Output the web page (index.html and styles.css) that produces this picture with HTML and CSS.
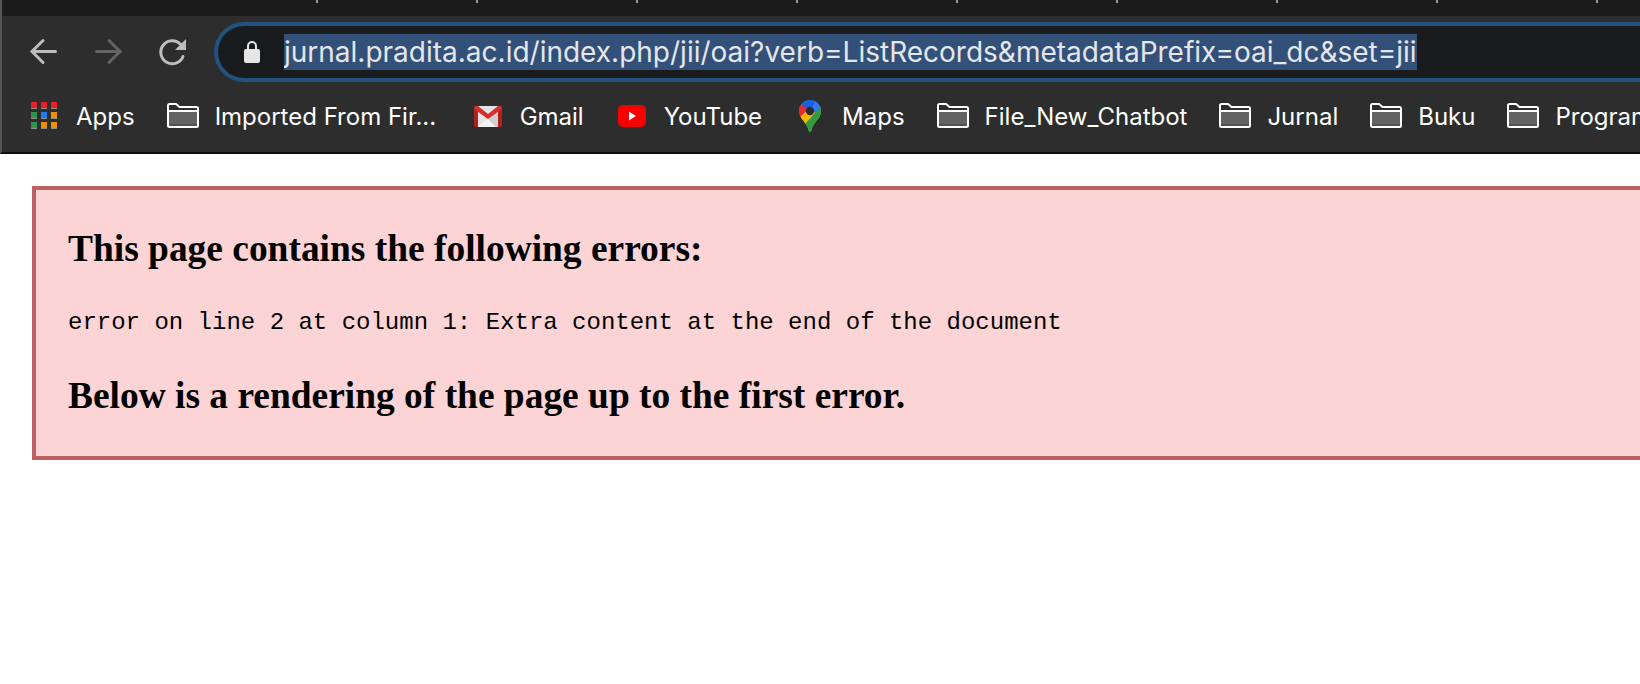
FILE: index.html
```html
<!DOCTYPE html>
<html lang="en">
<head>
  <meta charset="UTF-8" />
  <meta name="viewport" content="width=device-width, initial-scale=1.0" />
  <title>jurnal.pradita.ac.id</title>
  <link rel="stylesheet" href="styles.css">
</head>
<body>
  <!-- Shared icon shapes -->
  <svg class="sprite" aria-hidden="true">
    <symbol id="folder" viewBox="0 0 32 32">
      <path d="M2 12h28v14H2z" fill="#636363"/>
      <path d="M2 24h28v2H2z" fill="#505050"/>
      <path d="M1 25.500V5.500Q1 4 2.500 4H9l3.500 3H29.500Q31 7 31 8.500V25.500Q31 27 29.500 27H2.500Q1 27 1 25.500M1 11h30" fill="none" stroke="#fff" stroke-width="2"/>
    </symbol>
  </svg>

  <header class="browser">
    <div class="tabs"></div>

    <div class="toolbar">
      <button class="nav-btn" aria-label="Back">
        <svg width="32" height="32" viewBox="0 0 32 32"><path d="M27.500 15.500H4.500M15 4.500L4 15.500L15 26.500" fill="none" stroke="#bdbdbd" stroke-width="3" stroke-linecap="round"/></svg>
      </button>
      <button class="nav-btn" aria-label="Forward" disabled>
        <svg width="32" height="32" viewBox="0 0 32 32"><path d="M4.500 15.500H27.500M17 4.500L28 15.500L17 26.500" fill="none" stroke="#646464" stroke-width="3" stroke-linecap="round"/></svg>
      </button>
      <button class="nav-btn" aria-label="Reload">
        <svg width="32" height="32" viewBox="0 0 32 32"><path d="M27 20.500A11.500 11.500 0 1 1 24.500 8.200" fill="none" stroke="#bdbdbd" stroke-width="3" stroke-linecap="round"/><path d="M30 3v11H19z" fill="#bdbdbd"/></svg>
      </button>
      <label class="omnibox">
        <svg width="16" height="24" viewBox="0 0 16 24"><path d="M4 10V6a4 4 0 0 1 8 0v4" fill="none" stroke="#e6e6e6" stroke-width="2"/><rect y="9" width="16" height="14" rx="2" fill="#e6e6e6"/></svg>
        <input type="text" id="url" class="url" aria-label="Address" spellcheck="false" value="jurnal.pradita.ac.id/index.php/jii/oai?verb=ListRecords&amp;metadataPrefix=oai_dc&amp;set=jii">
      </label>
    </div>

    <nav class="bookmarks">
      <a href="#">
        <svg viewBox="0 0 32 32">
          <path d="M3 8h6v1H3zM13 8h6v1h-6zM23 8h6v1h-6zM3 18h6v1H3zM13 18h6v1h-6zM23 18h6v1h-6zM3 28h6v1H3zM13 28h6v1h-6zM23 28h6v1h-6z" fill="#8a8a8a"/>
          <path d="M3 2h6v6H3zM13 2h6v6h-6zM23 2h6v6h-6z" fill="#ee1c25"/>
          <path d="M3 12h6v6H3zM3 22h6v6H3z" fill="#35924a"/>
          <path d="M13 12h6v6h-6z" fill="#2479f3"/>
          <path d="M23 12h6v6h-6zM13 22h6v6h-6zM23 22h6v6h-6z" fill="#eb9100"/>
        </svg>
        <span>Apps</span>
      </a>
      <a href="#"><svg><use href="#folder"/></svg><span class="truncated">Imported From Fir...</span></a>
      <a href="#">
        <svg viewBox="0 0 32 32">
          <path d="M4 6h24v21H4z" fill="#e4e4e4"/>
          <path d="M6 27L16 18l10 9z" fill="#f3f3f3"/>
          <path d="M16 19l12-9v17h-4z" fill="#cfcfcf"/>
          <path d="M2 8h4v19H4q-2 0-2-2zM30 8h-4v19h2q2 0 2-2z" fill="#b3201c"/>
          <path d="M2 8q0-2 2-2h2l10 8 10-8h2q2 0 2 2v1L16 19 2 9z" fill="#d5302c"/>
        </svg>
        <span>Gmail</span>
      </a>
      <a href="#">
        <svg viewBox="0 0 32 32"><rect x="2" y="5" width="28" height="22" rx="5" fill="#f80000"/><path d="M13 11.500v9l7-4.500z" fill="#fff"/></svg>
        <span>YouTube</span>
      </a>
      <a href="#">
        <svg viewBox="0 0 32 32">
          <clipPath id="pin"><path d="M16 0a11 11 0 0 1 11 11c0 8-8 11-9.500 19.500Q16 33 14.500 30.500C13 22 5 19 5 11A11 11 0 0 1 16 0z"/></clipPath>
          <g clip-path="url(#pin)">
            <path d="M0 0h32v32H0z" fill="#379b3d"/>
            <path d="M16 11L26.500 0H0v6z" fill="#1a60e0"/>
            <path d="M16 11L22 0h10v4L16 22z" fill="#3674f2"/>
            <path d="M28 4v28H12z" fill="#379b3d"/>
            <path d="M7 4l9 7L4 25V4z" fill="#e42e2b"/>
            <path d="M16 7.500L5 18l7 7 9-12z" fill="#fbb400"/>
            <path d="M21 13L10 25l6 8 12-8V5z" fill="#379b3d"/>
          </g>
          <circle cx="16" cy="11" r="4.200" fill="#2d2d2d"/>
        </svg>
        <span>Maps</span>
      </a>
      <a href="#"><svg><use href="#folder"/></svg><span>File_New_Chatbot</span></a>
      <a href="#"><svg><use href="#folder"/></svg><span>Jurnal</span></a>
      <a href="#"><svg><use href="#folder"/></svg><span>Buku</span></a>
      <a href="#"><svg><use href="#folder"/></svg><span>Program</span></a>
    </nav>
  </header>

  <main class="parser-error">
    <h3>This page contains the following errors:</h3>
    <div class="message">error on line 2 at column 1: Extra content at the end of the document</div>
    <h3>Below is a rendering of the page up to the first error.</h3>
  </main>

  <script>
    // The address is selected as soon as the bar gets focus
    const url = document.getElementById("url");
    url.addEventListener("focus", () => url.select());
    url.focus();
  </script>
</body>
</html>
```
FILE: styles.css
```css
body {
  margin: 0;
  background: white;
  color: black;
  font-family: "Liberation Serif", "Times New Roman", serif;
  font-size: 32px;
  overflow-x: hidden;
}

.sprite {
  display: none;
}

/* Browser window */
.browser {
  background-color: #2d2d2d;
  border-left: 2px solid #555;
  border-bottom: 2px solid #0e0e0e;
  font-family: Inter, "Liberation Sans", sans-serif;
}

.tabs {
  height: 16px;
  background: repeating-linear-gradient(to right, #999 0 2px, transparent 2px 160px) 314px 0 / 100% 3px no-repeat #1b1b1b;
}

.toolbar {
  display: flex;
  align-items: center;
  padding-top: 6px;
  padding-left: 26px;
}

.nav-btn {
  display: flex;
  width: 32px;
  margin-right: 32px;
  padding: 0;
  border: none;
  background: none;
  cursor: pointer;
}

.nav-btn:last-of-type {
  margin-right: 26px;
}

.omnibox {
  flex: 1;
  display: flex;
  align-items: center;
  gap: 24px;
  height: 60px;
  box-sizing: border-box;
  padding-left: 26px;
  border: 4px solid #22527f;
  border-right: none;
  border-radius: 30px 0 0 30px;
  background-color: #191b1d;
}

.url {
  flex: 1;
  min-width: 0;
  height: 36px;
  padding: 0;
  border: none;
  outline: none;
  background: none;
  color: #e3e6ea;
  font-family: inherit;
  font-size: 28px;
  line-height: 36px;
}

.url::selection {
  background-color: #335079;
  color: #e3e6ea;
}

.bookmarks {
  display: flex;
  align-items: center;
  gap: 32px;
  height: 68px;
  padding-left: 26px;
  padding-bottom: 2px;
  overflow: hidden;
}

.bookmarks a {
  display: flex;
  flex-shrink: 0;
  align-items: center;
  gap: 16px;
  color: white;
  font-size: 24px;
  text-decoration: none;
  white-space: nowrap;
}

.bookmarks .truncated {
  width: 225px;
}

.bookmarks svg {
  width: 32px;
  height: 32px;
}

/* XML error box */
.parser-error {
  margin: 32px 0 32px 32px;
  padding: 0 32px;
  border: 4px solid #bd6063;
  border-right: none;
  background-color: #fcd4d5;
}

.parser-error h3 {
  line-height: 44px;
}

.message {
  font-family: "Liberation Mono", "Courier New", monospace;
  font-size: 24px;
  line-height: 28px;
}
```
